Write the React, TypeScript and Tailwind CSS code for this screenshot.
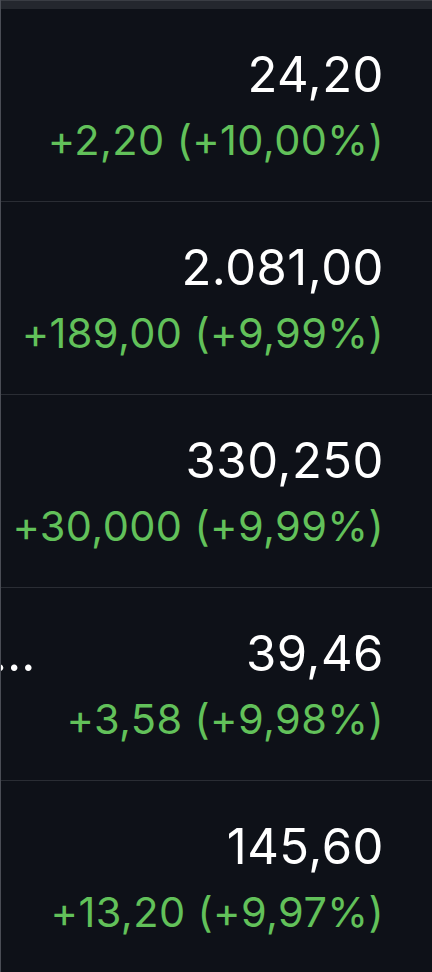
const rows = [
  { price: "24,20", change: "+2,20 (+10,00%)", name: "" },
  { price: "2.081,00", change: "+189,00 (+9,99%)", name: "" },
  { price: "330,250", change: "+30,000 (+9,99%)", name: "" },
  { price: "39,46", change: "+3,58 (+9,98%)", name: "…" },
  { price: "145,60", change: "+13,20 (+9,97%)", name: "" },
];

export default function App() {
  return (
    <div
      className="w-[432px] h-[972px] bg-[#0e1118] flex flex-col overflow-hidden border-l border-[#4a4d55]"
      style={{ fontFamily: "Inter, 'Noto Sans', sans-serif" }}
    >
      {/* top bar */}
      <div className="h-[9px] bg-[#24272e] border-t border-[#3a3d44] shrink-0" />
      {rows.map((r, i) => (
        <div
          key={i}
          className="h-[193px] shrink-0 flex flex-row border-b border-[#2a2d34] pr-[48px]"
        >
          <div className="flex-1 overflow-hidden pt-[38px]">
            {r.name && (
              <p className="text-white text-[49px] leading-[56px] -ml-[8px]">{r.name}</p>
            )}
          </div>
          <div className="flex flex-col items-end pt-[38px]">
            <p className="text-white text-[49px] leading-[56px] tracking-[0.5px]">{r.price}</p>
            <p className="text-[#62c15a] text-[41.5px] leading-[48px] mt-[13px] tracking-[0.4px]">
              {r.change}
            </p>
          </div>
        </div>
      ))}
      <div className="flex-1" />
      <div className="h-[2px] bg-[#4a4d55] shrink-0" />
    </div>
  );
}
